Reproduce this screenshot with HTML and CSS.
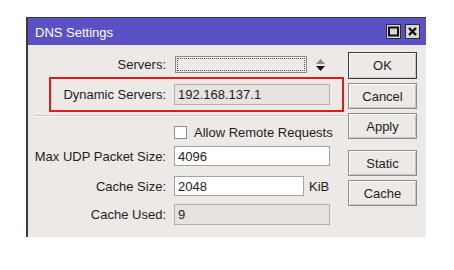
FILE: index.html
```html
<!DOCTYPE html>
<html lang="en">
<head>
  <meta charset="UTF-8" />
  <title>DNS Settings</title>
  <link rel="stylesheet" href="styles.css">
</head>
<body>
  <div class="window">
    <div class="titlebar">
      <span class="title">DNS Settings</span>
      <div class="title-btns">
        <span class="tbtn"><svg width="11" height="11" viewBox="0 0 11 11"><rect x="1" y="1.5" width="9" height="8" fill="none" stroke="#111" stroke-width="2"/></svg></span>
        <span class="tbtn"><svg width="11" height="11" viewBox="0 0 11 11"><path d="M2 2 L9 9 M9 2 L2 9" stroke="#111" stroke-width="2.4"/></svg></span>
      </div>
    </div>

    <div class="content">
      <div class="form">
        <div class="row servers">
          <label>Servers:</label>
          <div class="combo"></div>
          <svg class="spin" width="11" height="14" viewBox="0 0 11 14"><path d="M5.5 1 L10 6 H1 Z" fill="#888"/><path d="M1 8 H10 L5.5 13 Z" fill="#111"/></svg>
        </div>
        <div class="row dynamic">
          <label>Dynamic Servers:</label>
          <div class="field ro wide">192.168.137.1</div>
        </div>
        <div class="sep"></div>
        <div class="row check">
          <span class="box"></span>
          <span>Allow Remote Requests</span>
        </div>
        <div class="row udp">
          <label>Max UDP Packet Size:</label>
          <div class="field wide">4096</div>
        </div>
        <div class="row csize">
          <label>Cache Size:</label>
          <div class="field narrow">2048</div>
          <span class="unit">KiB</span>
        </div>
        <div class="row cused">
          <label>Cache Used:</label>
          <div class="field ro wide">9</div>
        </div>
        <div class="highlight"></div>
      </div>

      <div class="buttons">
        <button class="btn default">OK</button>
        <button class="btn">Cancel</button>
        <button class="btn">Apply</button>
        <button class="btn gap">Static</button>
        <button class="btn">Cache</button>
      </div>
    </div>
  </div>
</body>
</html>
```

FILE: styles.css
```css
:root {
  --face: #ece9e6;
  --title: #5a51c4;
  --text: #1e1e1e;
  --field-border: #a3a3a3;
}

body {
  margin: 0;
  background: #fff;
  padding: 17px 0 0 26px;
  font-family: "Liberation Sans", Arial, sans-serif;
  font-size: 13px;
  color: var(--text);
}

.window {
  width: 400px;
  height: 220px;
  background: var(--face);
  border-top: 1px solid #3a3a3a;
  border-left: 2px solid #3a3a3a;
  box-sizing: border-box;
}

.titlebar {
  height: 27px;
  background: var(--title);
  display: flex;
  align-items: center;
  justify-content: space-between;
  padding: 0 6px 0 7px;
}

.title {
  color: #fff;
  font-size: 13px;
  margin-top: 1px;
}

.title-btns {
  display: flex;
  gap: 4px;
}

.tbtn {
  width: 15px;
  height: 15px;
  box-sizing: border-box;
  background: #d9d7d4;
  border: 1px solid #2c2c2c;
  display: flex;
  align-items: center;
  justify-content: center;
}

.content {
  display: flex;
}

.form {
  width: 320px;
  position: relative;
  padding-top: 9px;
}

.row {
  display: flex;
  align-items: center;
  height: 21px;
}

.row label {
  width: 138px;
  text-align: right;
  margin-right: 8px;
  flex: none;
}

.combo {
  width: 132px;
  height: 17px;
  box-sizing: border-box;
  border: 1px solid #8c8c8c;
  outline: 1px dotted #555;
  outline-offset: -3px;
  background: var(--face);
  margin-left: 1px;
}

.spin {
  margin-left: 8px;
}

.field {
  height: 21px;
  box-sizing: border-box;
  border: 1px solid var(--field-border);
  background: #fff;
  padding: 0 3px;
  display: flex;
  align-items: center;
}

.field.wide { width: 156px; }
.field.narrow { width: 130px; }

.field.ro {
  background: #e6e3e0;
  border-color: #b4b1ad;
}

.unit {
  margin-left: 5px;
}

.dynamic { margin-top: 9px; }

.sep {
  margin: 10px 0 0 7px;
  height: 1px;
  background: #cfccc8;
  border-bottom: 1px solid #f8f7f6;
}

.check {
  margin-top: 8px;
  height: 15px;
  padding-left: 146px;
  gap: 7px;
}

.box {
  width: 13px;
  height: 13px;
  box-sizing: border-box;
  border: 1px solid #8e8e8e;
  background: #fff;
}

.udp { margin-top: 6px; height: 20px; }
.udp .field { height: 20px; }
.csize { margin-top: 10px; height: 20px; }
.csize .field { height: 20px; }
.cused { margin-top: 8px; }

.highlight {
  position: absolute;
  left: 21px;
  top: 32px;
  width: 295px;
  height: 35px;
  box-sizing: border-box;
  border: 2px solid #e01b1b;
}

.buttons {
  display: flex;
  flex-direction: column;
  gap: 4px;
  padding-top: 7px;
}

.btn {
  width: 69px;
  height: 26px;
  font-family: inherit;
  font-size: 13px;
  color: var(--text);
  background: var(--face);
  border: 1px solid #8f8d8a;
  box-shadow: inset 1px 1px 0 #fbfbfa, inset -1px -1px 0 #c9c6c2;
  padding: 0;
}

.btn.default {
  height: 27px;
  border: 1px solid #3c3c3c;
}

.btn.gap {
  margin-top: 7px;
}
```
